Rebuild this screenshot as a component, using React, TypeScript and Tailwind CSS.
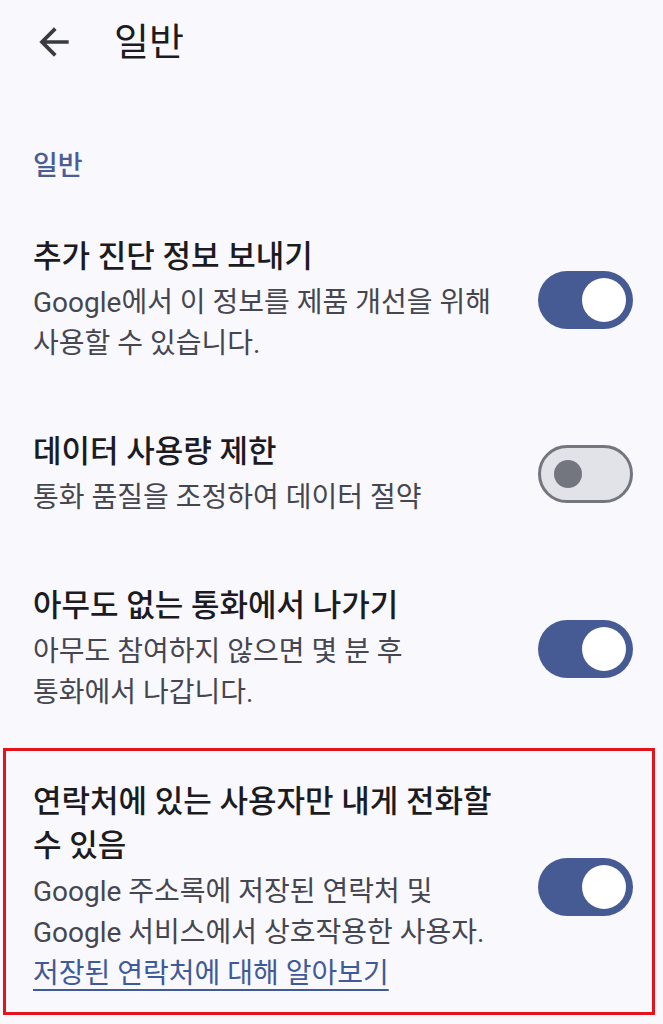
import { ReactNode } from "react"

const FONT = { fontFamily: "Roboto, 'Noto Sans CJK KR', sans-serif" }

function Toggle({ on }: { on: boolean }) {
  if (on) {
    return (
      <div className="flex h-[58px] w-[95px] shrink-0 items-center justify-end rounded-full bg-[#465a93] pr-[7px]">
        <span className="block h-[44px] w-[44px] rounded-full bg-white" />
      </div>
    )
  }
  return (
    <div className="flex h-[58px] w-[95px] shrink-0 items-center rounded-full border-[3px] border-[#74767f] bg-[#e2e2e9] pl-[13px]">
      <span className="block h-[28px] w-[28px] rounded-full bg-[#74767f]" />
    </div>
  )
}

function Row({
  title,
  on,
  children,
}: {
  title: ReactNode
  on: boolean
  children: ReactNode
}) {
  return (
    <div className="flex items-center justify-between">
      <div className="w-[477px] break-keep">
        <div className="text-[31px] leading-[44px] font-medium text-[#1b1b21]">{title}</div>
        <div className="mt-[3px] w-[470px] text-[28px] leading-[41px] text-[#45464f]">{children}</div>
      </div>
      <Toggle on={on} />
    </div>
  )
}

export default function App() {
  return (
    <div className="min-h-[1024px] w-[663px] bg-[#f8f8fd]" style={FONT}>
      {/* top bar */}
      <div className="flex h-[84px] items-center pl-[32px]">
        <svg width="44" height="44" viewBox="0 0 24 24" className="text-[#3a3b40]">
          <path d="M20 11H7.83l5.59-5.59L12 4l-8 8 8 8 1.41-1.41L7.83 13H20v-2z" fill="currentColor" />
        </svg>
        <h1 className="ml-[38px] text-[38px] leading-none font-normal text-[#1b1b21]">일반</h1>
      </div>

      <div className="pl-[33px] pt-[64px] pb-[18px] text-[27px] leading-[36px] font-medium text-[#4a5d96]">
        일반
      </div>

      <div className="flex flex-col">
        <div className="py-[33px] pl-[33px] pr-[30px]">
          <Row title="추가 진단 정보 보내기" on={true}>
            Google에서 이 정보를 제품 개선을 위해 사용할 수 있습니다.
          </Row>
        </div>

        <div className="py-[33px] pl-[33px] pr-[30px]">
          <Row title="데이터 사용량 제한" on={false}>
            통화 품질을 조정하여 데이터 절약
          </Row>
        </div>

        <div className="py-[33px] pl-[33px] pr-[30px]">
          <Row title="아무도 없는 통화에서 나가기" on={true}>
            아무도 참여하지 않으면 몇 분 후 통화에서 나갑니다.
          </Row>
        </div>

        <div className="mb-[11px] ml-[3px] mr-[8px] mt-[2px] border-[3px] border-[#e3141c] pt-[29px] pb-[18px] pl-[27px] pr-[19px]">
          <div className="flex items-center justify-between">
            <div className="w-[477px] break-keep">
              <div className="text-[31px] leading-[44px] font-medium text-[#1b1b21]">
                연락처에 있는 사용자만 내게 전화할 수 있음
              </div>
              <div className="mt-[3px] w-[470px] text-[28px] leading-[41px] text-[#45464f]">
                Google 주소록에 저장된 연락처 및 Google 서비스에서 상호작용한 사용자.
              </div>
              <a
                href="#"
                className="block text-[28px] leading-[41px] text-[#3f5a98] underline decoration-[2px] underline-offset-[6px]"
              >
                저장된 연락처에 대해 알아보기
              </a>
            </div>
            <Toggle on={true} />
          </div>
        </div>
      </div>
    </div>
  )
}
